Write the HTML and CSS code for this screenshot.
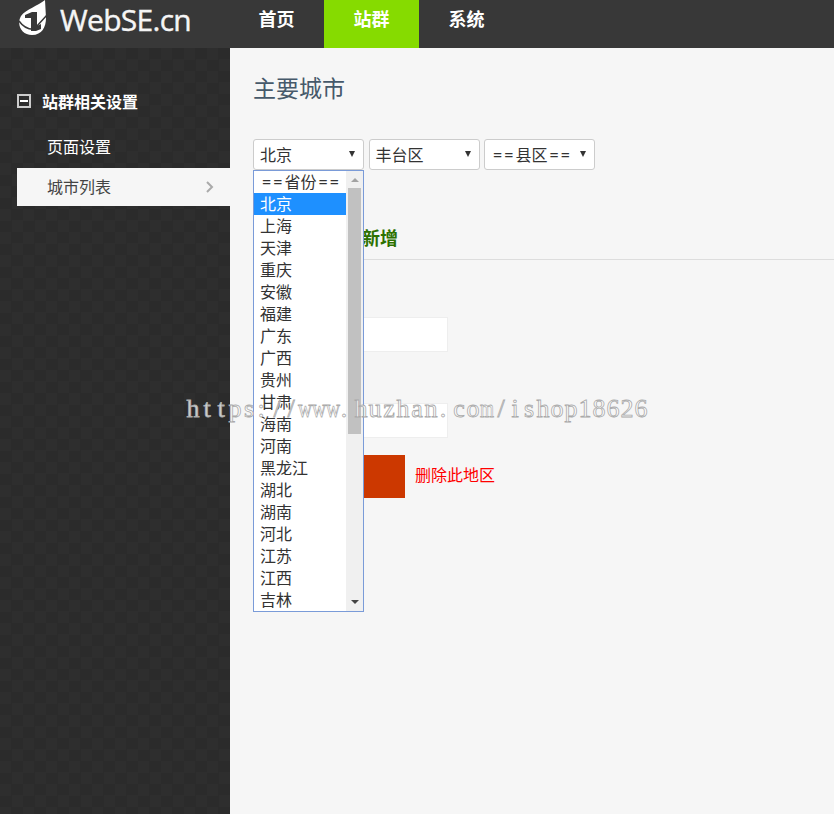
FILE: index.html
```html
<!DOCTYPE html>
<html lang="zh-CN">
<head>
    <meta charset="utf-8" />
    <title>主要城市</title>
    <link rel="stylesheet" href="styles.css">
</head>
<body>
    <div class="header">
        <div class="logo">
            <svg class="logo_icon" width="30" height="36" viewBox="0 0 30 36">
                <path d="M27 0C20 6 8 9 3 16C-2 25 4 35 14 35C24 35 28 27 28 18Z" fill="#fff" />
                <path d="M7 15L14 12H19V26L23 24V29L18 31H13V18H7Z" fill="#383838" />
                <path d="M1 21C6 28 12 30 18 29M19 26L29 15" stroke="#383838" stroke-width="1.5" fill="none" />
            </svg>
            <span class="logo_text">WebSE.cn</span>
        </div>
        <div class="nav">
            <a>首页</a>
            <a class="active">站群</a>
            <a>系统</a>
        </div>
    </div>
    <div class="wrapper">
        <div class="sidebar">
            <div class="menu_title">
                <svg width="14" height="14" viewBox="0 0 14 14">
                    <rect x="1" y="1" width="12" height="12" fill="none" stroke="#ccc" stroke-width="2" />
                    <path d="M3 7H11" stroke="#fff" stroke-width="2" />
                </svg>
                <span>站群相关设置</span>
            </div>
            <ul class="menu">
                <li><span>页面设置</span></li>
                <li class="current"><span>城市列表</span>
                    <svg width="8" height="12" viewBox="0 0 8 12">
                        <path d="M1 1L6 6L1 11" fill="none" stroke="#aaa" stroke-width="2" />
                    </svg>
                </li>
            </ul>
        </div>
        <div class="main">
            <h1>主要城市</h1>
            <div class="select_row">
                <div class="select">北京<i></i>
                    <div class="dropdown">
                        <ul class="options">
                            <li><b>==</b>省份<b>==</b></li>
                            <li class="selected">北京</li>
                            <li>上海</li>
                            <li>天津</li>
                            <li>重庆</li>
                            <li>安徽</li>
                            <li>福建</li>
                            <li>广东</li>
                            <li>广西</li>
                            <li>贵州</li>
                            <li>甘肃</li>
                            <li>海南</li>
                            <li>河南</li>
                            <li>黑龙江</li>
                            <li>湖北</li>
                            <li>湖南</li>
                            <li>河北</li>
                            <li>江苏</li>
                            <li>江西</li>
                            <li>吉林</li>
                        </ul>
                        <div class="scrollbar">
                            <span class="arrow_up"></span>
                            <span class="thumb"></span>
                            <span class="arrow_down"></span>
                        </div>
                    </div>
                </div>
                <div class="select">丰台区<i></i></div>
                <div class="select"><span><b>==</b>县区<b>==</b></span><i></i></div>
            </div>
            <div class="tab_title">新增</div>
            <div class="form">
                <div class="input"></div>
                <div class="input"></div>
                <div class="actions">
                    <div class="submit"></div>
                    <a class="delete">删除此地区</a>
                </div>
            </div>
        </div>
    </div>
    <svg class="watermark" width="470" height="36" viewBox="0 0 470 36">
        <text y="24" x="7 21 35 49 63 75 91 105">https://</text>
        <text class="wide" y="24" x="112" textLength="42" lengthAdjust="spacingAndGlyphs">www</text>
        <text y="24" x="158 175 189 203 217 231 245 257 273 287">.huzhan.co</text>
        <text class="wide" y="24" x="294" textLength="14" lengthAdjust="spacingAndGlyphs">m</text>
        <text y="24" x="315 329 343 357 371 385 399 413 427 441 455">/ishop18626</text>
    </svg>
</body>
</html>
```
FILE: styles.css
```css
html, body {
    margin: 0;
    padding: 0;
    font-size: 16px;
    font-family: "Open Sans", "Noto Sans CJK SC", sans-serif;
    color: #333;
    background: #f6f6f6;
    overflow: hidden;
}

ul {
    margin: 0;
    padding: 0;
    list-style: none;
}

.header {
    display: flex;
    height: 48px;
    background: #383838;
    color: #fff;
}

.logo {
    display: flex;
    width: 229px;
}

.logo_icon {
    margin-left: 18px;
}

.logo_text {
    margin-left: 12px;
    font-size: 30px;
    line-height: 40px;
    letter-spacing: -.7px;
    color: #f5f5f5;
    -webkit-text-stroke: .4px #f5f5f5;
}

.nav {
    display: flex;
}

    .nav a {
        width: 95px;
        height: 48px;
        line-height: 38px;
        text-align: center;
        font-size: 18px;
        font-weight: bold;
    }

    .nav a.active {
        background: #86db00;
    }

.wrapper {
    display: flex;
    height: 766px;
}

.sidebar {
    width: 230px;
    box-sizing: border-box;
    padding: 40px 0 0 17px;
    color: #fff;
    background: repeating-conic-gradient(#2b2b2b 0 25%, #2e2e2e 0 50%) 0 0 / 23px 23px;
}

.menu_title {
    display: flex;
    align-items: center;
    height: 26px;
    margin-bottom: 14px;
    font-weight: bold;
}

    .menu_title svg {
        margin: 0 11px 0 0;
    }

.menu li {
    display: flex;
    align-items: center;
    justify-content: space-between;
    height: 38px;
    margin-bottom: 2px;
    padding: 0 16px 0 30px;
}

    .menu li span {
        padding-bottom: 2px;
    }

    .menu li.current {
        background: #f6f6f6;
        color: #444;
    }

.main {
    flex: 1;
    padding-left: 23px;
}

h1 {
    margin: 22px 0 0;
    height: 69px;
    line-height: 36px;
    font-size: 23px;
    font-weight: 400;
    color: #46596a;
}

.select_row {
    display: flex;
    gap: 4.5px;
}

.select {
    position: relative;
    display: flex;
    justify-content: space-between;
    box-sizing: border-box;
    width: 111px;
    height: 31px;
    padding: 0 8px 0 6px;
    line-height: 31px;
    border: 1px solid #ccc;
    border-radius: 3px;
    background: #fff;
}

    .select i {
        margin-top: 11px;
        width: 0;
        height: 0;
        border: solid transparent;
        border-width: 6px 3px 0;
        border-top-color: #333;
    }

.select b, .options b {
    font-weight: normal;
    letter-spacing: 2.1px;
    margin-left: 2px;
}

.dropdown {
    position: absolute;
    z-index: 2;
    left: -1px;
    top: 30px;
    display: flex;
    box-sizing: border-box;
    width: 111px;
    height: 442px;
    border: 1px solid #7a9bd8;
    background: #fff;
}

.options {
    flex: 1;
}

    .options li {
        height: 22px;
        line-height: 23px;
        padding-left: 6px;
        white-space: nowrap;
    }

    .options li.selected {
        background: #1e90ff;
        color: #fff;
    }

.scrollbar {
    display: flex;
    flex-direction: column;
    align-items: center;
    width: 17px;
    background: #f0f0f0;
}

.thumb {
    width: 13px;
    height: 246px;
    margin-left: -1px;
    background: #c1c1c1;
}

.arrow_up {
    margin: 7px 0 6px;
    border: solid transparent;
    border-width: 0 4px 4px;
    border-bottom-color: #a3a3a3;
}

.arrow_down {
    margin: auto 0 7px;
    border: solid transparent;
    border-width: 4px 4px 0;
    border-top-color: #444;
}

.tab_title {
    box-sizing: border-box;
    height: 90px;
    padding: 53px 0 0 109px;
    line-height: 30px;
    font-size: 18px;
    font-weight: bold;
    color: #2d7100;
    border-bottom: 1px solid #ddd;
}

.form {
    padding-top: 57px;
}

.input {
    box-sizing: border-box;
    width: 195px;
    height: 35px;
    margin-bottom: 51px;
    border: 1px solid #eee;
    background: #fff;
}

.actions {
    display: flex;
    margin-top: -34px;
}

.submit {
    width: 152px;
    height: 43px;
    background: #cc3800;
}

.delete {
    margin-left: 10px;
    line-height: 41px;
    color: #f00;
}

.watermark {
    position: absolute;
    z-index: 3;
    left: 186px;
    top: 393px;
}

    .watermark text {
        font-family: "Liberation Serif", serif;
        font-size: 26px;
        text-anchor: middle;
        fill: #fff;
        fill-opacity: .8;
        stroke: #aaa;
        stroke-width: .8;
    }

    .watermark text.wide {
        text-anchor: start;
    }
```
